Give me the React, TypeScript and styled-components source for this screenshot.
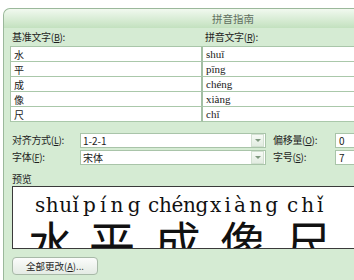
import React from "react";
import styled, { createGlobalStyle } from "styled-components";

const Global = createGlobalStyle`
  html, body {
    margin: 0;
    padding: 0;
    width: 354px;
    height: 280px;
    overflow: hidden;
    background: #ffffff;
  }
  body {
    font-family: "Noto Sans CJK SC", "Noto Sans", sans-serif;
  }
`;

const Window = styled.div`
  margin: 8px 0 0 3px;
  width: 420px;
  height: 290px;
  border: 1px solid #9bb89b;
  border-right: none;
  border-radius: 7px 0 0 0;
  background: #d5ebd3;
  overflow: hidden;
`;

const TitleBar = styled.div`
  height: 19px;
  display: flex;
  align-items: center;
  padding-left: 208px;
  font-size: 10.5px;
  color: #5f6f5f;
  background: linear-gradient(#f1f9ef, #c3e1bf);
  border-radius: 6px 0 0 0;
`;

const Client = styled.div`
  padding-left: 6px;
  display: flex;
  flex-direction: column;
`;

const Label = styled.span`
  font-size: 10px;
  color: #1e1e1e;
  line-height: 12px;
  white-space: nowrap;
  letter-spacing: -0.3px;
  u {
    font-size: 9px;
  }
`;

const HeadRow = styled.div`
  height: 18px;
  display: grid;
  grid-template-columns: 193px 1fr;
  align-items: center;
  padding-left: 2px;
`;

const Table = styled.div`
  display: grid;
  grid-template-columns: 192px 1fr;
  border-top: 1px solid #a9c6a9;
  border-left: 1px solid #a9c6a9;
  background: #ffffff;
`;

const Cell = styled.div<{ $first?: boolean }>`
  height: 14px;
  border-bottom: 1px solid #aac8aa;
  border-right: ${(p) => (p.$first ? "2px solid #a3bfa3" : "none")};
  padding-left: 3px;
  display: flex;
  align-items: center;
  font-size: ${(p) => (p.$first ? "10px" : "11px")};
  font-family: ${(p) =>
    p.$first
      ? '"Noto Sans CJK SC", sans-serif'
      : '"Liberation Serif", "DejaVu Serif", serif'};
  color: #1a1a1a;
`;

const Options = styled.div`
  margin-top: 11px;
  display: grid;
  grid-template-columns: 68px 186px 69px 1fr;
  grid-auto-rows: 15px;
  row-gap: 2px;
  align-items: center;
  padding-left: 2px;
`;

const SideLabel = styled(Label)`
  padding-left: 7px;
`;

const Combo = styled.div`
  height: 15px;
  box-sizing: border-box;
  border: 1px solid #a9c4a9;
  background: #ffffff;
  display: flex;
  align-items: center;
  font-size: 10px;
  color: #1a1a1a;
`;

const ComboText = styled.span`
  flex: 1;
  padding-left: 2px;
  font-family: "Noto Sans CJK SC", sans-serif;
`;

const Arrow = styled.span`
  width: 11px;
  height: 11px;
  margin-right: 1px;
  background: linear-gradient(#f6faf5, #e2ece1);
  border: 1px solid #d2e0d1;
  display: flex;
  align-items: center;
  justify-content: center;
  &::after {
    content: "";
    border-left: 3px solid transparent;
    border-right: 3px solid transparent;
    border-top: 3px solid #7f987f;
  }
`;

const Field = styled.div`
  height: 15px;
  box-sizing: border-box;
  border: 1px solid #a9c4a9;
  border-right: none;
  background: #ffffff;
  display: flex;
  align-items: center;
  padding-left: 3px;
  font-size: 10px;
  color: #1a1a1a;
`;

const PreviewLabel = styled(Label)`
  margin-top: 7px;
  padding-left: 2px;
  height: 14px;
  display: flex;
  align-items: center;
`;

const Preview = styled.div`
  margin: 0 0 0 2px;
  height: 63px;
  box-sizing: border-box;
  border: 1px solid #3a3a3a;
  border-right: none;
  background: #ffffff;
  overflow: hidden;
`;

const PinyinRow = styled.div`
  display: flex;
  padding: 7px 0 0 22px;
  height: 22px;
`;

const Py = styled.span<{ $w: number; $ls?: number }>`
  width: ${(p) => p.$w}px;
  flex: none;
  text-align: left;
  white-space: nowrap;
  font-family: "DejaVu Serif", "Liberation Serif", serif;
  font-size: 20px;
  line-height: 22px;
  letter-spacing: ${(p) => p.$ls ?? 0}px;
  color: #111;
`;

const CharRow = styled.div`
  display: flex;
  padding: 1px 0 0 9px;
`;

const Han = styled.span<{ $w: number }>`
  width: ${(p) => p.$w}px;
  flex: none;
  text-align: center;
  font-family: "Noto Sans CJK SC", sans-serif;
  font-size: 46px;
  line-height: 46px;
  color: #111;
`;

const Button = styled.button`
  margin: 8px 0 0 2px;
  align-self: flex-start;
  width: 86px;
  height: 18px;
  border: 1px solid #a7b9a7;
  border-radius: 4px;
  background: linear-gradient(#fbfcfb, #e4ebe4);
  font-family: "Noto Sans CJK SC", sans-serif;
  font-size: 9.5px;
  color: #1e1e1e;
  padding: 0;
  display: flex;
  align-items: center;
  justify-content: center;
  u {
    font-size: 9px;
  }
`;

const rows = [
  ["水", "shuǐ"],
  ["平", "pīng"],
  ["成", "chéng"],
  ["像", "xiàng"],
  ["尺", "chǐ"],
];

const pinyin = [
  { t: "shuǐ", w: 48, ls: 0.5 },
  { t: "píng", w: 65, ls: 4.2 },
  { t: "chéng", w: 62, ls: -0.3 },
  { t: "xiàng", w: 77, ls: 3.2 },
  { t: "chǐ", w: 45, ls: 3 },
];

const hanzi = [
  { t: "水", w: 58 },
  { t: "平", w: 64 },
  { t: "成", w: 67 },
  { t: "像", w: 64 },
  { t: "尺", w: 66 },
];

export default function App() {
  return (
    <>
      <Global />
      <Window>
        <TitleBar>拼音指南</TitleBar>
        <Client>
          <HeadRow>
            <Label>
              基准文字(<u>B</u>):
            </Label>
            <Label>
              拼音文字(<u>R</u>):
            </Label>
          </HeadRow>
          <Table>
            {rows.map(([h, p]) => (
              <React.Fragment key={h}>
                <Cell $first>{h}</Cell>
                <Cell>{p}</Cell>
              </React.Fragment>
            ))}
          </Table>
          <Options>
            <Label>
              对齐方式(<u>L</u>):
            </Label>
            <Combo>
              <ComboText>1-2-1</ComboText>
              <Arrow />
            </Combo>
            <SideLabel>
              偏移量(<u>O</u>):
            </SideLabel>
            <Field>0</Field>
            <Label>
              字体(<u>F</u>):
            </Label>
            <Combo>
              <ComboText>宋体</ComboText>
              <Arrow />
            </Combo>
            <SideLabel>
              字号(<u>S</u>):
            </SideLabel>
            <Field>7</Field>
          </Options>
          <PreviewLabel>预览</PreviewLabel>
          <Preview>
            <PinyinRow>
              {pinyin.map((p) => (
                <Py key={p.t} $w={p.w} $ls={p.ls}>
                  {p.t}
                </Py>
              ))}
            </PinyinRow>
            <CharRow>
              {hanzi.map((h) => (
                <Han key={h.t} $w={h.w}>
                  {h.t}
                </Han>
              ))}
            </CharRow>
          </Preview>
          <Button>
            全部更改(<u>A</u>)...
          </Button>
        </Client>
      </Window>
    </>
  );
}
